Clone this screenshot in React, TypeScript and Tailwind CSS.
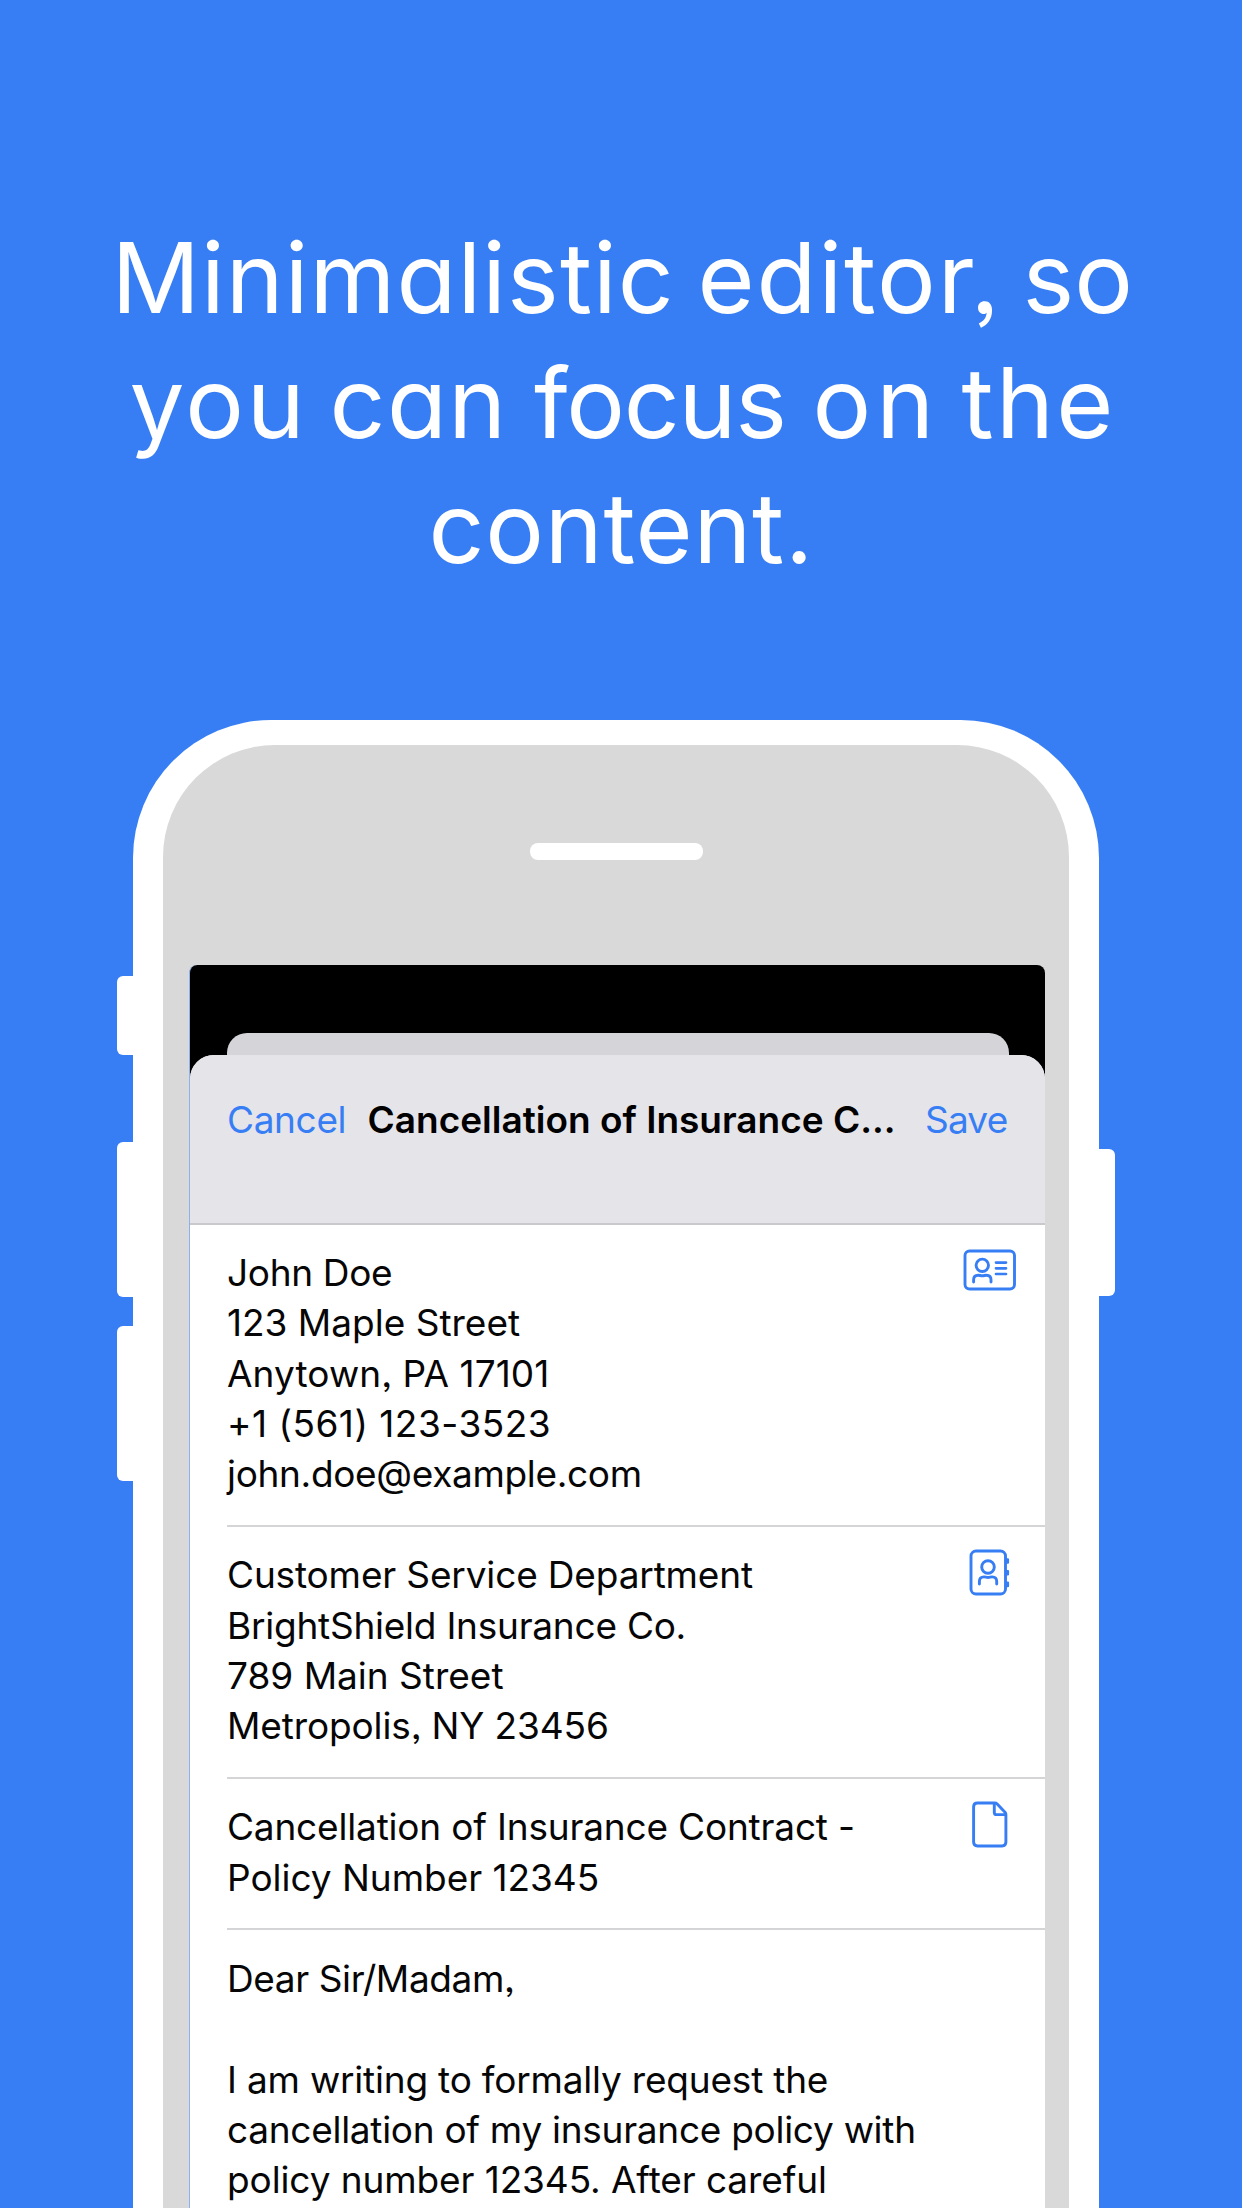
import type { ReactNode } from "react";

type Line = { text: string; tracking?: string };

const headline: { word: string; cls: string }[][] = [
  [
    { word: "Minimalistic", cls: "w-[586px] tracking-[1.05px]" },
    { word: "editor,", cls: "w-[325px] tracking-[1.9px]" },
    { word: "so", cls: "tracking-[0px]" },
  ],
  [
    { word: "you", cls: "w-[200px] tracking-[2.7px]" },
    { word: "can", cls: "w-[204.5px] tracking-[1.4px]" },
    { word: "focus", cls: "w-[278.5px] tracking-[-1.2px]" },
    { word: "on", cls: "w-[149px] tracking-[5px]" },
    { word: "the", cls: "tracking-[2.4px]" },
  ],
  [{ word: "content.", cls: "tracking-[0.8px]" }],
];
const headlineIndent = ["pl-[111.5px]", "pl-[129.5px]", "pl-[428.5px]"];

const sender: Line[] = [
  { text: "John Doe", tracking: "tracking-[-0.33px]" },
  { text: "123 Maple Street" },
  { text: "Anytown, PA 17101", tracking: "tracking-[0.09px]" },
  { text: "+1 (561) 123-3523", tracking: "tracking-[0.5px]" },
  { text: "john.doe@example.com", tracking: "tracking-[-0.33px]" },
];
const recipient: Line[] = [
  { text: "Customer Service Department", tracking: "tracking-[-0.15px]" },
  { text: "BrightShield Insurance Co.", tracking: "tracking-[-0.24px]" },
  { text: "789 Main Street" },
  { text: "Metropolis, NY 23456", tracking: "tracking-[-0.12px]" },
];
const subject: Line[] = [
  { text: "Cancellation of Insurance Contract -", tracking: "tracking-[-0.18px]" },
  { text: "Policy Number 12345", tracking: "tracking-[-0.03px]" },
];
const body: Line[] = [
  { text: "Dear Sir/Madam,", tracking: "tracking-[-0.4px]" },
  { text: "" },
  { text: "I am writing to formally request the", tracking: "tracking-[-0.2px]" },
  { text: "cancellation of my insurance policy with", tracking: "tracking-[-0.28px]" },
  { text: "policy number 12345. After careful", tracking: "tracking-[-0.1px]" },
];

function IdCardIcon() {
  return (
    <svg width="54" height="42" viewBox="0 0 54 42" fill="none" stroke="#377ef5" strokeWidth="2.9" strokeLinecap="round">
      <rect x="2" y="2" width="49.5" height="38" rx="4.5" />
      <circle cx="19.3" cy="16.3" r="6.2" />
      <path d="M10.6 33v-2.2c0-3 1.9-4.6 4.6-4.6 1.6 0 2.3.6 4.1.6s2.5-.6 4.1-.6c2.7 0 4.600 1.600 4.600 4.600V33" />
      <path d="M33 13.600h10M33 19.300h10M33 25h10" strokeWidth="2.7" />
    </svg>
  );
}

function ContactBookIcon() {
  return (
    <svg width="42" height="47" viewBox="0 0 42 47" fill="none" stroke="#377ef5" strokeWidth="2.9" strokeLinecap="round">
      <rect x="2" y="2" width="34.5" height="43" rx="5" />
      <circle cx="19" cy="18" r="6.3" />
      <path d="M10.4 35v-2.4c0-3 1.9-4.7 4.6-4.7 1.6 0 2.3.6 4 .6s2.5-.6 4.1-.6c2.7 0 4.6 1.7 4.6 4.7V35" />
      <path d="M36.5 9.2h2.400a1.200 1.200 0 0 1 1.200 1.200v3.200a1.200 1.200 0 0 1-1.200 1.200h-2.400zM36.500 20.900h2.400a1.200 1.200 0 0 1 1.200 1.200v3.200a1.200 1.200 0 0 1-1.200 1.200h-2.400zM36.500 32.600h2.400a1.200 1.200 0 0 1 1.200 1.200V37a1.200 1.200 0 0 1-1.200 1.200h-2.400z" fill="#377ef5" stroke="none" />
    </svg>
  );
}

function DocumentIcon() {
  return (
    <svg width="36" height="47" viewBox="0 0 36 47" fill="none" stroke="#377ef5" strokeWidth="2.9" strokeLinejoin="round">
      <path d="M5.5 2h17.2c1 0 1.8.3 2.5 1l7.8 8.2c.6.7.9 1.4.9 2.3v27.6c0 2.5-1.4 3.9-3.8 3.9H5.5C3 45 1.6 43.6 1.6 41.1V5.9C1.6 3.4 3 2 5.5 2z" />
      <path d="M22.3 2v9.4c0 1.5.8 2.2 2.2 2.2h9.2" />
    </svg>
  );
}

function Section({ lines, icon, iconBox, last }: { lines: Line[]; icon?: ReactNode; iconBox?: string; last?: boolean }) {
  return (
    <section className={last ? "ml-[37px] flex justify-between pt-[23.5px]" : "ml-[37px] flex justify-between border-b-2 border-[#d5d5d7] pt-[23.5px] pb-[25.2px]"}>
      <div className="text-[37px] leading-[50.35px] whitespace-nowrap text-[#060606]">
        {lines.map((line, i) => (
          <p key={i} className={line.tracking ?? "tracking-normal"}>
            {line.text || "\u00a0"}
          </p>
        ))}
      </div>
      {icon && <div className={iconBox}>{icon}</div>}
    </section>
  );
}

function LeftButtons() {
  return (
    <div className="flex w-4 shrink-0 flex-col pt-[256px]">
      <div className="h-[79px] rounded-l-md bg-white" />
      <div className="mt-[87px] h-[155px] rounded-l-md bg-white" />
      <div className="mt-[29px] h-[155px] rounded-l-md bg-white" />
    </div>
  );
}

function Screen() {
  return (
    <div className="ml-[26px] flex h-[1300px] w-[856px] flex-col overflow-hidden rounded-t-[8px] border-l border-[#8fb0ee] bg-black pt-[67.5px]">
      <div className="mr-[36px] ml-[37px] h-[22.5px] rounded-t-[20px] bg-[#d5d4d9]" />
      <div className="flex flex-1 flex-col overflow-hidden rounded-t-[24px] bg-white">
        <header className="flex h-[169.5px] shrink-0 border-b-2 border-[#c9c9cd] bg-[#e5e4e9] pt-[40px] text-[37px] leading-[50px] whitespace-nowrap">
          <span className="ml-[37px] w-[140.5px] tracking-[-0.35px] text-[#377ef5]">Cancel</span>
          <span className="w-[557.5px] font-semibold text-black">Cancellation of Insurance C...</span>
          <span className="tracking-[-0.8px] text-[#377ef5]">Save</span>
        </header>
        <Section lines={sender} icon={<IdCardIcon />} iconBox="mr-[28px] pt-px" />
        <Section lines={recipient} icon={<ContactBookIcon />} iconBox="mr-[34px] -mt-px" />
        <Section lines={subject} icon={<DocumentIcon />} iconBox="mr-[37px] -mt-px" />
        <Section lines={body} last />
      </div>
    </div>
  );
}

export default function App() {
  return (
    <main className="flex h-[2208px] w-[1242px] flex-col overflow-hidden bg-[#377ef5] font-['Inter','Liberation_Sans',sans-serif] [font-feature-settings:'ss03']">
      <h1 className="h-[720px] shrink-0 pt-[215px] text-[98px] leading-[125px] font-normal text-white [font-feature-settings:'cv11','ss03']">
        {headline.map((line, i) => (
          <span key={i} className={`flex whitespace-nowrap ${headlineIndent[i]}`}>
            {line.map(({ word, cls }) => (
              <span key={word} className={`shrink-0 ${cls}`}>
                {word}
              </span>
            ))}
          </span>
        ))}
      </h1>
      <div className="flex flex-1 pl-[117px]">
        <LeftButtons />
        <div className="h-[1600px] w-[966px] shrink-0 rounded-t-[138px] bg-white px-[30px] pt-[25px]">
          <div className="h-[1600px] rounded-t-[112px] bg-[#d9d9d9] pt-[98px]">
            <div className="ml-[366.5px] h-[17px] w-[173px] rounded-lg bg-white" />
            <div className="h-[105px]" />
            <Screen />
          </div>
        </div>
        <div className="w-4 shrink-0 pt-[429px]">
          <div className="h-[147px] rounded-r-md bg-white" />
        </div>
      </div>
    </main>
  );
}
